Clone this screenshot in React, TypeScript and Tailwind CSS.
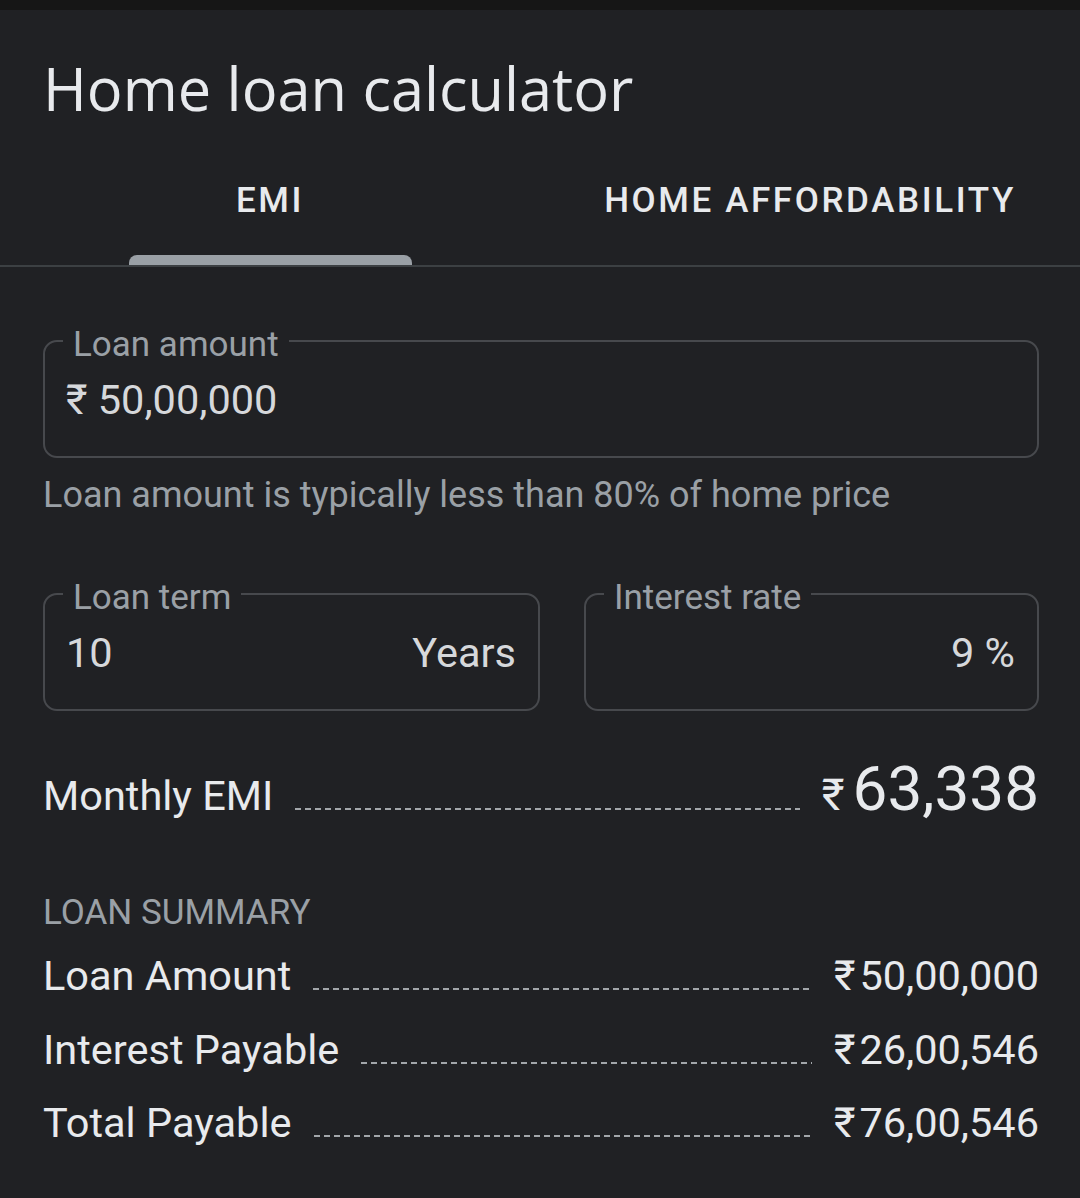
import { useState } from 'react';

type Row = { label: string; value: string };

const SUMMARY: Row[] = [
  { label: 'Loan Amount', value: '50,00,000' },
  { label: 'Interest Payable', value: '26,00,546' },
  { label: 'Total Payable', value: '76,00,546' },
];

function OutlinedField({
  label,
  children,
  className = '',
}: {
  label: string;
  children: React.ReactNode;
  className?: string;
}) {
  return (
    <fieldset
      className={`border-2 border-[#47494d] rounded-[14px] pl-[21px] pr-[22px] pb-[19px] ${className}`}
    >
      <legend className="ml-[-3px] px-[10px] pt-[8px] text-[35px] leading-[36px] text-[#9aa0a6]">{label}</legend>
      <div className="flex items-center h-[74px] text-[41.5px] text-[#d6d8db]">{children}</div>
    </fieldset>
  );
}

// label - - - - - value, dashes sit on the text baseline
function DottedRow({ label, value, big }: Row & { big?: boolean }) {
  return (
    <div className="flex items-baseline text-[#e8eaed] whitespace-nowrap">
      <span className="text-[41.5px] leading-[48px]">{label}</span>
      <span className="flex-1 mx-[22px] mb-[1px] h-[2px] bg-[repeating-linear-gradient(to_right,#a2a6aa_0_6px,transparent_6px_10px)]" />
      {big ? (
        <>
          <span className="text-[44px] mr-[8px]">₹</span>
          <span className="text-[62px] leading-[62px]">{value}</span>
        </>
      ) : (
        <>
          <span className="text-[41.5px] leading-[48px] mr-[4px]">₹</span>
          <span className="text-[41.5px] leading-[48px]">{value}</span>
        </>
      )}
    </div>
  );
}

export default function App() {
  const [tab, setTab] = useState<'emi' | 'afford'>('emi');

  return (
    <div
      className="w-[1080px] h-[1198px] bg-[#202124] overflow-hidden"
      style={{ fontFamily: 'Roboto, "Noto Sans", sans-serif' }}
    >
      <div className="h-[10px] bg-[#161616]" />

      <h1
        className="px-[43px] pt-[44px] text-[59.5px] leading-[68px] font-medium text-[#e8eaed]"
        style={{ fontFamily: '"Open Sans", Roboto, sans-serif' }}
      >
        Home loan calculator
      </h1>

      {/* tabs */}
      <div className="mt-[45px] grid grid-cols-2 border-b-2 border-[#3c4043]">
        {[
          { id: 'emi' as const, text: 'EMI' },
          { id: 'afford' as const, text: 'HOME AFFORDABILITY' },
        ].map((t) => (
          <button
            key={t.id}
            onClick={() => setTab(t.id)}
            className="flex flex-col items-center pt-[12px] text-[35px] font-medium tracking-[2.6px] text-[#e8eaed]"
          >
            <span className="h-[44px] leading-[44px]">{t.text}</span>
            <span
              className={`mt-[32px] h-[10px] w-[283px] rounded-t-[8px] ${
                tab === t.id ? 'bg-[#9aa0a6]' : 'bg-transparent'
              }`}
            />
          </button>
        ))}
      </div>

      <div className="pl-[43px] pr-[41px] pt-[52px]">
        <OutlinedField label="Loan amount">
          <span>₹ 50,00,000</span>
        </OutlinedField>
        <p className="mt-[15px] text-[36px] leading-[44px] text-[#9aa0a6]">
          Loan amount is typically less than 80% of home price
        </p>

        <div className="mt-[55px] flex gap-[44px]">
          <OutlinedField label="Loan term" className="w-[497px]">
            <span className="flex-1">10</span>
            <span>Years</span>
          </OutlinedField>
          <OutlinedField label="Interest rate" className="flex-1">
            <span className="flex-1 text-right">9 %</span>
          </OutlinedField>
        </div>

        <div className="mt-[47px]">
          <DottedRow label="Monthly EMI" value="63,338" big />
        </div>

        <div className="mt-[65px] text-[35px] leading-[40px] text-[#9aa0a6]">LOAN SUMMARY</div>

        <div className="mt-[19px] flex flex-col gap-[25.5px]">
          {SUMMARY.map((r) => (
            <DottedRow key={r.label} label={r.label} value={r.value} />
          ))}
        </div>
      </div>
    </div>
  );
}
